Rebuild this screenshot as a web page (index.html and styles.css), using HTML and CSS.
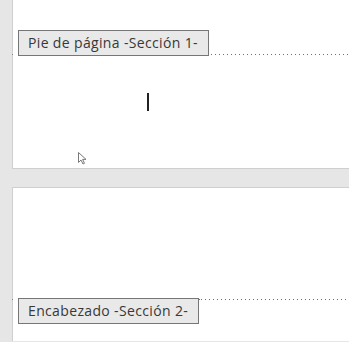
FILE: index.html
```html
<!DOCTYPE html>
<html lang="es">
<head>
<meta charset="utf-8">
<link rel="stylesheet" href="styles.css">
</head>
<body>
<div class="doc">
  <section class="page page-1">
    <div class="sep sep-footer">
      <span class="dot"></span>
      <div class="tag">Pie de página -Sección 1-</div>
      <div class="line"></div>
    </div>
    <div class="caret"></div>
    <svg class="pointer" width="11" height="14" viewBox="0 0 11 14">
      <path d="M1.5 1.5 L1.5 11.5 L4 9 L6 13 L7.5 12.3 L5.6 8.4 L9 8.4 Z" fill="#fff" stroke="#7a7a7a" stroke-width="1" stroke-linejoin="round"/>
    </svg>
  </section>
  <section class="page page-2">
    <div class="sep sep-header">
      <span class="dot"></span>
      <div class="tag">Encabezado -Sección 2-</div>
      <div class="line"></div>
    </div>
  </section>
</div>
</body>
</html>
```

FILE: styles.css
```css
html, body {
  margin: 0;
  padding: 0;
  background: #e6e6e6;
  width: 349px;
  height: 342px;
  overflow: hidden;
}

.doc {
  display: flex;
  flex-direction: column;
  gap: 18px;
  padding-left: 12px;
  font-family: "Open Sans", "Noto Sans", sans-serif;
}

.page {
  position: relative;
  background: #ffffff;
  border-left: 1px solid #cfcfcf;
}

.page-1 {
  height: 168px;
  border-bottom: 1px solid #cfcfcf;
}

.page-2 {
  height: 153px;
  border-top: 1px solid #cfcfcf;
}

.sep {
  display: flex;
  padding-left: 5px;
  position: relative;
}

.sep-footer {
  margin-top: 30px;
  align-items: flex-end;
}

.sep-footer .line {
  margin-bottom: 1px;
}

.sep-header {
  margin-top: 110px;
  align-items: flex-start;
}

.sep-header .line {
  margin-top: 1px;
}

.tag {
  box-sizing: border-box;
  height: 26px;
  padding: 0 10px 0 9px;
  background: #e9e9e9;
  border: 1px solid #767676;
  color: #383838;
  font-size: 14px;
  line-height: 24px;
  letter-spacing: 0.35px;
  white-space: nowrap;
}

.line {
  flex: 1;
  height: 1px;
  background: repeating-linear-gradient(90deg, #6f6f6f 0 1px, transparent 1px 4px);
  background-position: 2px 0;
}

.dot {
  position: absolute;
  left: -1px;
  width: 1px;
  height: 1px;
  background: #8a8a8a;
}

.sep-footer .dot { bottom: 1px; }
.sep-header .dot { top: 1px; }

.caret {
  position: absolute;
  left: 134px;
  top: 93px;
  width: 2px;
  height: 18px;
  background: #222222;
}

.pointer {
  position: absolute;
  left: 64px;
  top: 151px;
}
```
